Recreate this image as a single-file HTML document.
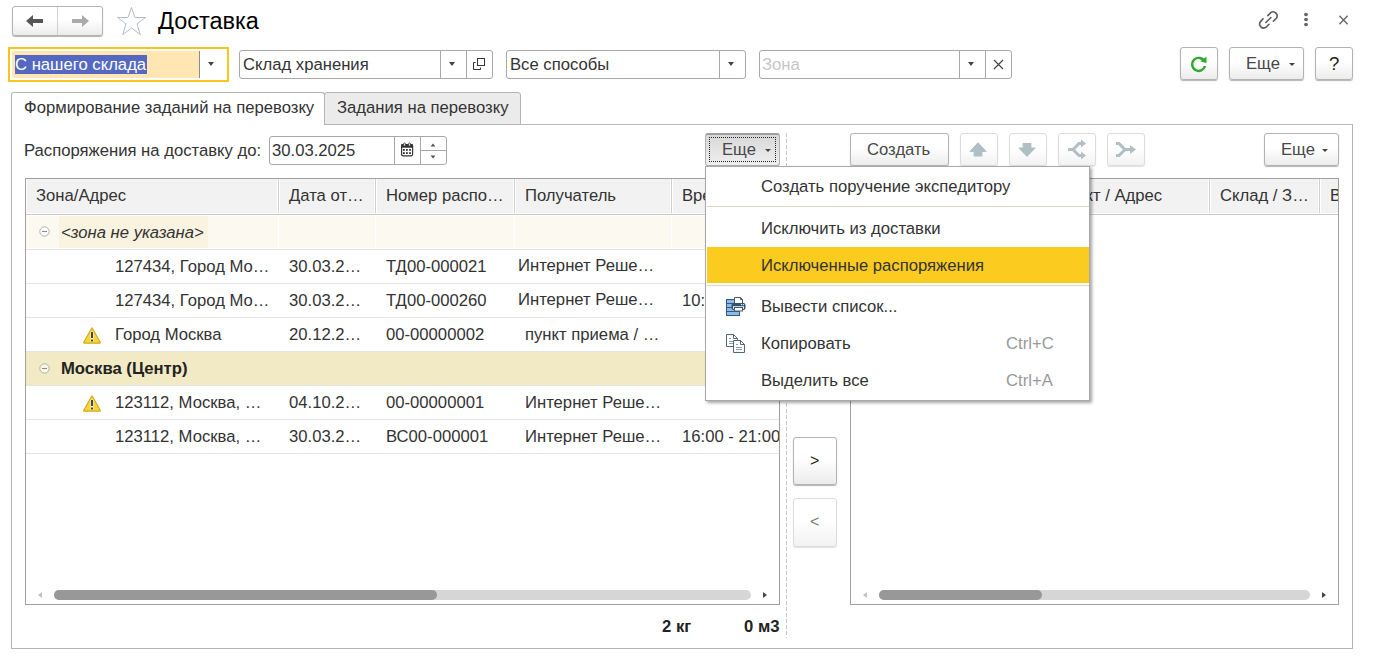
<!DOCTYPE html>
<html><head><meta charset="utf-8">
<style>
*{box-sizing:border-box;margin:0;padding:0}
html,body{width:1373px;height:661px;overflow:hidden;background:#fff}
body{position:relative;font-family:"Liberation Sans",sans-serif;font-size:16.67px;color:#333}
.a{position:absolute}
.t{position:absolute;white-space:nowrap;line-height:22px}
.btn{position:absolute;border:1px solid #b2b2b2;border-radius:3px;background:linear-gradient(#fff 45%,#ececec);box-shadow:0 1px 1px rgba(0,0,0,.3)}
.dbtn{position:absolute;border:1px solid #dcdcdc;border-radius:3px;background:linear-gradient(#fff 45%,#f2f2f2);box-shadow:0 1px 1px rgba(0,0,0,.12)}
.fld{position:absolute;border:1px solid #a8a8a8;border-radius:3px;background:#fff}
.vs{position:absolute;width:1px;background:#a8a8a8}
.dd{position:absolute;width:0;height:0;border-left:3.5px solid transparent;border-right:3.5px solid transparent;border-top:4px solid #444}
.rl{position:absolute;height:1px;background:#e4e4e4}
.hs{position:absolute;width:1px;background:#cfcfcf;box-shadow:-1px 0 0 #fff,1px 0 0 #fff}
.bs{position:absolute;width:1px;background:#ececec}
</style></head><body>

<!-- nav buttons -->
<div class="btn" style="left:12px;top:6px;width:91px;height:30px"></div>
<div class="a" style="left:57px;top:7px;width:1px;height:28px;background:#d0d0d0"></div>
<svg class="a" style="left:24px;top:13px" width="22" height="16" viewBox="0 0 22 16"><path d="M2 8 L9 2 L9 6 L19 6 L19 10 L9 10 L9 14 Z" fill="#555"/></svg>
<svg class="a" style="left:69px;top:13px" width="22" height="16" viewBox="0 0 22 16"><path d="M20 8 L13 2 L13 6 L3 6 L3 10 L13 10 L13 14 Z" fill="#aaa"/></svg>
<!-- star -->
<svg class="a" style="left:116px;top:6px" width="31" height="30" viewBox="0 0 31 30"><path d="M15.5 1.5 L19 11.5 L29.5 11.5 L21 17.8 L24.2 28.5 L15.5 22 L6.8 28.5 L10 17.8 L1.5 11.5 L12 11.5 Z" fill="none" stroke="#b4bcc4" stroke-width="1"/></svg>
<div class="t" style="left:158px;top:8px;font-size:23.5px;line-height:27px;color:#000">Доставка</div>

<!-- top right icons -->
<svg class="a" style="left:1250px;top:5px" width="40" height="30" viewBox="0 0 40 30"><g fill="none" stroke="#5a5a5a" stroke-width="1.6" stroke-linecap="round"><path d="M17.8 10.6 L20.7 7.7 A4 4 0 0 1 26.3 13.3 L23.4 16.2"/><path d="M13.1 13.8 L10.5 16.6 A4 4 0 0 0 16.1 22.2 L19 19.3"/><path d="M15.9 17.5 L20.9 12.5"/></g></svg>
<svg class="a" style="left:1301px;top:12px" width="10" height="16" viewBox="0 0 10 16"><g fill="#666"><ellipse cx="5" cy="2.5" rx="1.95" ry="1.75"/><ellipse cx="5" cy="7.5" rx="1.95" ry="1.75"/><ellipse cx="5" cy="12.4" rx="1.95" ry="1.75"/></g></svg>
<svg class="a" style="left:1336px;top:13px" width="14" height="14" viewBox="0 0 14 14"><path d="M3.4 2.8 L11.6 11.2 M11.6 2.8 L3.4 11.2" stroke="#666" stroke-width="1.4"/></svg>

<!-- filter row -->
<div class="a" style="left:8px;top:47px;width:221px;height:35px;border:2px solid #f8c61a"></div>
<div class="a" style="left:12px;top:51px;width:188px;height:27px;background:#ffe6b2;border-radius:2px"></div>
<div class="a" style="left:199px;top:51px;width:1px;height:27px;background:#8a8a8a"></div>
<div class="a" style="left:15px;top:55px;width:132px;height:19px;background:#5468c2"></div>
<div class="t" style="left:15px;top:54px;color:#fff">С нашего склада</div>
<div class="dd" style="left:208px;top:62px"></div>

<div class="fld" style="left:239px;top:50px;width:254px;height:29px"></div>
<div class="vs" style="left:440px;top:50px;height:29px"></div>
<div class="vs" style="left:466px;top:50px;height:29px"></div>
<div class="t" style="left:243px;top:54px">Склад хранения</div>
<div class="dd" style="left:449px;top:62px"></div>
<svg class="a" style="left:472px;top:57px" width="14" height="14" viewBox="0 0 14 14"><g fill="none" stroke="#333" stroke-width="1"><rect x="5.5" y="1.5" width="7" height="7"/><path d="M3.5 5.5 H1.5 V12.5 H8.5 V10.5"/></g></svg>

<div class="fld" style="left:506px;top:50px;width:240px;height:29px"></div>
<div class="vs" style="left:719px;top:50px;height:29px"></div>
<div class="t" style="left:510px;top:54px">Все способы</div>
<div class="dd" style="left:728px;top:62px"></div>

<div class="fld" style="left:759px;top:50px;width:253px;height:29px"></div>
<div class="vs" style="left:959px;top:50px;height:29px"></div>
<div class="vs" style="left:985px;top:50px;height:29px"></div>
<div class="t" style="left:762px;top:54px;color:#c6c6c6">Зона</div>
<div class="dd" style="left:968px;top:62px"></div>
<svg class="a" style="left:992px;top:58px" width="13" height="13" viewBox="0 0 13 13"><path d="M2 2 L11 11 M11 2 L2 11" stroke="#444" stroke-width="1.2"/></svg>

<div class="btn" style="left:1180px;top:47px;width:38px;height:33px"></div>
<svg class="a" style="left:1188px;top:53px" width="22" height="22" viewBox="0 0 22 22"><path d="M16.5 8.5 A6.5 6.5 0 1 0 17 13" fill="none" stroke="#2ea82e" stroke-width="2.4"/><path d="M12.5 8.5 L18.5 3.5 L18.5 10 Z" fill="#2ea82e"/></svg>
<div class="btn" style="left:1229px;top:47px;width:75px;height:33px"></div>
<div class="t" style="left:1246px;top:53px;color:#484848">Еще</div>
<div class="dd" style="left:1289px;top:63px;border-left-width:3.5px;border-right-width:3.5px;border-top-width:3.5px"></div>
<div class="btn" style="left:1315px;top:47px;width:38px;height:33px"></div>
<div class="t" style="left:1329px;top:53px;font-size:18.6px;color:#222">?</div>

<!-- tabs -->
<div class="a" style="left:11px;top:124px;width:1342px;height:525px;border:1px solid #b4b4b4;border-top-color:#b8b8b8"></div>
<div class="a" style="left:324px;top:92px;width:197px;height:33px;background:#ebebeb;border:1px solid #b4b4b4;border-radius:3px 3px 0 0"></div>
<div class="a" style="left:11px;top:92px;width:314px;height:33px;background:#fff;border:1px solid #b4b4b4;border-bottom:none;border-radius:3px 3px 0 0"></div>
<div class="t" style="left:24px;top:97px">Формирование заданий на перевозку</div>
<div class="t" style="left:337px;top:97px">Задания на перевозку</div>

<!-- content header -->
<div class="t" style="left:24px;top:140px">Распоряжения на доставку до:</div>
<div class="fld" style="left:269px;top:136px;width:178px;height:29px"></div>
<div class="vs" style="left:394px;top:136px;height:29px"></div>
<div class="vs" style="left:420px;top:136px;height:29px"></div>
<div class="a" style="left:420px;top:150px;width:26px;height:1px;background:#a8a8a8"></div>
<div class="t" style="left:272px;top:140px">30.03.2025</div>
<svg class="a" style="left:400px;top:142px" width="14" height="15" viewBox="0 0 14 15"><rect x="1.6" y="2.6" width="11" height="11.2" rx="1.6" fill="#fff" stroke="#333" stroke-width="1.2"/><rect x="1.1" y="2.1" width="12" height="3.7" rx="1.3" fill="#333"/><rect x="3.6" y="0.9" width="1.8" height="3.2" rx=".9" fill="#fff" stroke="#333" stroke-width=".8"/><rect x="8.6" y="0.9" width="1.8" height="3.2" rx=".9" fill="#fff" stroke="#333" stroke-width=".8"/><g fill="#333"><rect x="3" y="7" width="1.8" height="1.8"/><rect x="6" y="7" width="1.8" height="1.8"/><rect x="9.1" y="7" width="1.8" height="1.8"/><rect x="3" y="10.2" width="1.8" height="1.8"/><rect x="6" y="10.2" width="1.8" height="1.8"/><rect x="9.1" y="10.2" width="1.8" height="1.8"/></g></svg>
<svg class="a" style="left:430px;top:143px" width="6" height="4" viewBox="0 0 6 4"><path d="M3 0.5 L5.5 3.5 H0.5 Z" fill="#555"/></svg>
<svg class="a" style="left:430px;top:155px" width="6" height="4" viewBox="0 0 6 4"><path d="M3 3.5 L5.5 0.5 H0.5 Z" fill="#555"/></svg>

<!-- pressed Еще -->
<div class="a" style="left:705px;top:133px;width:75px;height:33px;border:1px solid #b0b0b0;border-top:2px solid #a0a0a0;border-radius:3px;background:linear-gradient(#d8d8d8,#efefef)"></div>
<div class="a" style="left:709px;top:137px;width:67px;height:25px;border:1px dotted #222"></div>
<div class="t" style="left:722px;top:139px;color:#484848">Еще</div>
<div class="dd" style="left:765px;top:149px;border-left-width:3.5px;border-right-width:3.5px;border-top-width:3.5px"></div>

<!-- dashed splitter -->
<div class="a" style="left:786px;top:133px;width:1px;height:505px;background:repeating-linear-gradient(#c8c8c8 0 4px,transparent 4px 6px)"></div>

<!-- right toolbar -->
<div class="btn" style="left:850px;top:133px;width:99px;height:33px"></div>
<div class="t" style="left:867px;top:139px;color:#484848">Создать</div>
<div class="dbtn" style="left:960px;top:133px;width:38px;height:33px"></div>
<div class="dbtn" style="left:1009px;top:133px;width:38px;height:33px"></div>
<div class="dbtn" style="left:1058px;top:133px;width:38px;height:33px"></div>
<div class="dbtn" style="left:1107px;top:133px;width:38px;height:33px"></div>
<svg class="a" style="left:969px;top:141px" width="19" height="17" viewBox="0 0 19 17"><path d="M9 2.2 L16.8 10.3 L12.8 10.3 L12.8 15 L5.2 15 L5.2 10.3 L1.2 10.3 Z" fill="#b0bec5" stroke="#b0bec5" stroke-width="1.2" stroke-linejoin="round"/></svg>
<svg class="a" style="left:1018px;top:141px" width="19" height="17" viewBox="0 0 19 17"><path d="M9 15 L16.8 7 L12.8 7 L12.8 2.5 L5.2 2.5 L5.2 7 L1.2 7 Z" fill="#b0bec5" stroke="#b0bec5" stroke-width="1.2" stroke-linejoin="round"/></svg>
<svg class="a" style="left:1066px;top:139px" width="22" height="21" viewBox="0 0 22 21"><g fill="none" stroke="#b0bec5" stroke-width="3"><path d="M2 10.5 H7 L13 4.5 H16"/><path d="M7 10.5 L13 16.5 H16"/></g><path d="M15 0.5 L20 4.5 L15 8.5 Z M15 12.5 L20 16.5 L15 20.5 Z" fill="#b0bec5"/></svg>
<svg class="a" style="left:1115px;top:139px" width="22" height="21" viewBox="0 0 22 21"><g fill="none" stroke="#b0bec5" stroke-width="3"><path d="M1 4.5 H4 L10 10.5 H16"/><path d="M1 16.5 H4 L10 10.5"/></g><path d="M15 6 L21 10.5 L15 15 Z" fill="#b0bec5"/></svg>
<div class="btn" style="left:1264px;top:133px;width:75px;height:33px"></div>
<div class="t" style="left:1281px;top:139px;color:#484848">Еще</div>
<div class="dd" style="left:1322px;top:149px;border-left-width:3.5px;border-right-width:3.5px;border-top-width:3.5px"></div>

<!-- left table -->
<div class="a" style="left:25px;top:178px;width:755px;height:427px;border:1px solid #a0a0a0;overflow:hidden">
  <div class="a" style="left:1px;top:0;width:752px;height:34px;background:#f2f2f2"></div>
  <div class="a" style="left:0;top:35px;width:753px;height:1px;background:#cacaca"></div>
  <div class="hs" style="left:252px;top:0;height:34px"></div>
  <div class="hs" style="left:349px;top:0;height:34px"></div>
  <div class="hs" style="left:488px;top:0;height:34px"></div>
  <div class="hs" style="left:645px;top:0;height:34px"></div>
  <div class="t" style="left:10px;top:6px">Зона/Адрес</div>
  <div class="t" style="left:263px;top:6px">Дата от…</div>
  <div class="t" style="left:360px;top:6px">Номер распо…</div>
  <div class="t" style="left:499px;top:6px">Получатель</div>
  <div class="t" style="left:656px;top:6px">Время</div>
  <!-- group 1 -->
  <div class="a" style="left:0;top:37px;width:753px;height:32px;background:#fcf9f0"></div>
  <div class="a" style="left:33px;top:37px;width:149px;height:32px;background:#faf3e0"></div>
  <div class="bs" style="left:252px;top:37px;height:32px;background:#fff"></div>
  <div class="bs" style="left:349px;top:37px;height:32px;background:#fff"></div>
  <div class="bs" style="left:488px;top:37px;height:32px;background:#fff"></div>
  <div class="bs" style="left:645px;top:37px;height:32px;background:#fff"></div>
  <svg class="a" style="left:11px;top:45px" width="15" height="15" viewBox="0 0 15 15"><circle cx="7.5" cy="7.5" r="4.7" fill="#fff" stroke="#b0b0b0" stroke-width="1"/><path d="M5 7.5 H10" stroke="#8a8a8a" stroke-width="1.1"/></svg>
  <div class="t" style="left:35px;top:43px;font-style:italic">&lt;зона не указана&gt;</div>
  <div class="rl" style="left:0;top:70px;width:753px"></div>
  <div class="t" style="left:89px;top:77px">127434, Город Мо…</div>
  <div class="t" style="left:263px;top:77px">30.03.2…</div>
  <div class="t" style="left:360px;top:77px">ТД00-000021</div>
  <div class="t" style="left:492px;top:76px">Интернет Реше…</div>
  <div class="rl" style="left:0;top:104px;width:753px"></div>
  <div class="t" style="left:89px;top:111px">127434, Город Мо…</div>
  <div class="t" style="left:263px;top:111px">30.03.2…</div>
  <div class="t" style="left:360px;top:111px">ТД00-000260</div>
  <div class="t" style="left:656px;top:111px">10:00 - 18:00</div>
  <div class="t" style="left:492px;top:110px">Интернет Реше…</div>
  <div class="rl" style="left:0;top:138px;width:753px"></div>
  <svg class="a" style="left:56px;top:147px" width="20" height="19" viewBox="0 0 20 19"><path d="M9.7 2.2 Q10 1.6 10.3 2.2 L18.2 16.2 Q18.5 17.2 17.5 17.2 H2.5 Q1.5 17.2 1.8 16.2 Z" fill="#f5d43c" stroke="#d2ab1c" stroke-width="1.2" stroke-linejoin="round"/><rect x="8.5" y="5.5" width="3" height="7.5" rx="1" fill="#fff" fill-opacity=".85"/><rect x="9" y="6" width="2" height="6" fill="#454545"/><rect x="8.5" y="13" width="3" height="3" rx="1" fill="#fff" fill-opacity=".85"/><rect x="9" y="13.5" width="2" height="2" fill="#454545"/></svg>
  <div class="t" style="left:89px;top:145px">Город Москва</div>
  <div class="t" style="left:263px;top:145px">20.12.2…</div>
  <div class="t" style="left:360px;top:145px">00-00000002</div>
  <div class="t" style="left:499px;top:145px">пункт приема / …</div>
  <div class="rl" style="left:0;top:172px;width:753px"></div>
  <div class="a" style="left:0;top:173px;width:753px;height:33px;background:#f2eac4"></div>
  <svg class="a" style="left:11px;top:182px" width="15" height="15" viewBox="0 0 15 15"><circle cx="7.5" cy="7.5" r="4.7" fill="rgba(255,255,255,.6)" stroke="#b0b0b0" stroke-width="1"/><path d="M5 7.5 H10" stroke="#8a8a8a" stroke-width="1.1"/></svg>
  <div class="t" style="left:35px;top:179px;font-weight:bold;color:#222">Москва (Центр)</div>
  <div class="rl" style="left:0;top:206px;width:753px"></div>
  <svg class="a" style="left:56px;top:215px" width="20" height="19" viewBox="0 0 20 19"><path d="M9.7 2.2 Q10 1.6 10.3 2.2 L18.2 16.2 Q18.5 17.2 17.5 17.2 H2.5 Q1.5 17.2 1.8 16.2 Z" fill="#f5d43c" stroke="#d2ab1c" stroke-width="1.2" stroke-linejoin="round"/><rect x="8.5" y="5.5" width="3" height="7.5" rx="1" fill="#fff" fill-opacity=".85"/><rect x="9" y="6" width="2" height="6" fill="#454545"/><rect x="8.5" y="13" width="3" height="3" rx="1" fill="#fff" fill-opacity=".85"/><rect x="9" y="13.5" width="2" height="2" fill="#454545"/></svg>
  <div class="t" style="left:89px;top:213px">123112, Москва, …</div>
  <div class="t" style="left:263px;top:213px">04.10.2…</div>
  <div class="t" style="left:360px;top:213px">00-00000001</div>
  <div class="t" style="left:499px;top:213px">Интернет Реше…</div>
  <div class="rl" style="left:0;top:240px;width:753px"></div>
  <div class="t" style="left:89px;top:247px">123112, Москва, …</div>
  <div class="t" style="left:263px;top:247px">30.03.2…</div>
  <div class="t" style="left:360px;top:247px">ВС00-000001</div>
  <div class="t" style="left:499px;top:247px">Интернет Реше…</div>
  <div class="t" style="left:656px;top:247px">16:00 - 21:00</div>
  <div class="rl" style="left:0;top:274px;width:753px"></div>
  <!-- scrollbar -->
  <div class="a" style="left:28px;top:411px;width:697px;height:10px;background:#d6d6d6;border-radius:5px"></div>
  <div class="a" style="left:28px;top:411px;width:383px;height:10px;background:#989898;border-radius:5px"></div>
  <div class="dd" style="left:12px;top:413px;border-top:3px solid transparent;border-bottom:3px solid transparent;border-right:4px solid #c0c0c0;border-left:none"></div>
  <div class="dd" style="left:737px;top:413px;border-top:3px solid transparent;border-bottom:3px solid transparent;border-left:4px solid #444;border-right:none"></div>
</div>

<!-- middle buttons -->
<div class="btn" style="left:793px;top:437px;width:44px;height:48px"></div>
<div class="t" style="left:810px;top:450px;font-size:16px;color:#222">&gt;</div>
<div class="dbtn" style="left:793px;top:498px;width:44px;height:49px"></div>
<div class="t" style="left:810px;top:511px;font-size:16px;color:#7a7a7a">&lt;</div>

<!-- right table -->
<div class="a" style="left:850px;top:178px;width:489px;height:427px;border:1px solid #a0a0a0;overflow:hidden">
  <div class="a" style="left:1px;top:0;width:486px;height:34px;background:#f2f2f2"></div>
  <div class="a" style="left:0;top:35px;width:487px;height:1px;background:#cacaca"></div>
  <div class="hs" style="left:358px;top:0;height:34px"></div>
  <div class="hs" style="left:468px;top:0;height:34px"></div>
  <div class="t" style="left:205px;top:6px">Пункт / Адрес</div>
  <div class="t" style="left:369px;top:6px">Склад / З…</div>
  <div class="t" style="left:479px;top:6px">Вес</div>
  <div class="a" style="left:28px;top:411px;width:431px;height:10px;background:#d6d6d6;border-radius:5px"></div>
  <div class="a" style="left:28px;top:411px;width:163px;height:10px;background:#989898;border-radius:5px"></div>
  <div class="dd" style="left:12px;top:413px;border-top:3px solid transparent;border-bottom:3px solid transparent;border-right:4px solid #c0c0c0;border-left:none"></div>
  <div class="dd" style="left:471px;top:413px;border-top:3px solid transparent;border-bottom:3px solid transparent;border-left:4px solid #444;border-right:none"></div>
</div>

<!-- totals -->
<div class="t" style="left:662px;top:616px;font-weight:bold;color:#222">2 кг</div>
<div class="t" style="left:744px;top:616px;font-weight:bold;color:#222">0 м3</div>

<!-- popup menu -->
<div class="a" style="left:705px;top:166px;width:385px;height:235px;background:#fff;border:1px solid #a8a8a8;box-shadow:2px 2px 3px rgba(0,0,0,.35)">
  <div class="t" style="left:55px;top:9px">Создать поручение экспедитору</div>
  <div class="a" style="left:1px;top:39px;width:382px;height:1px;background:#dcd7c2"></div>
  <div class="t" style="left:55px;top:51px">Исключить из доставки</div>
  <div class="a" style="left:1px;top:80px;width:382px;height:36px;background:#fbcc1f"></div>
  <div class="t" style="left:55px;top:88px">Исключенные распоряжения</div>
  <div class="a" style="left:1px;top:118px;width:382px;height:1px;background:#dcd7c2"></div>
  <svg class="a" style="left:16px;top:125px" width="28" height="28" viewBox="0 0 28 28"><rect x="4.5" y="7.5" width="13" height="16" fill="#8db9e2" stroke="#2d5a86"/><path d="M4.5 11.5 H17.5 M4.5 15.5 H17.5 M4.5 19.5 H17.5" stroke="#2d5a86"/><path d="M12.5 5.5 H18.5 L20.5 7.5 V12 H12.5 Z" fill="#fff" stroke="#555"/><path d="M18.5 5.5 V7.5 H20.5" fill="none" stroke="#555"/><rect x="9.5" y="11" width="14" height="7" rx="2.2" fill="#2f5479"/><rect x="11" y="14.2" width="11" height="2.6" fill="#e8edf2"/><rect x="12.5" y="15.5" width="8" height="3.5" fill="#fff" stroke="#4a5a6a"/><circle cx="19.6" cy="12.6" r=".7" fill="#fff"/><circle cx="21.5" cy="12.6" r=".7" fill="#fff"/></svg>
  <div class="t" style="left:55px;top:129px">Вывести список...</div>
  <svg class="a" style="left:16px;top:163px" width="28" height="28" viewBox="0 0 28 28"><path d="M4.5 4.5 H11.5 L15.5 8.5 V16.5 H4.5 Z" fill="#fff" stroke="#53667a"/><path d="M11.5 4.5 V8.5 H15.5" fill="none" stroke="#53667a"/><path d="M11.5 10.5 H18.5 L22.5 14.5 V22.5 H11.5 Z" fill="#fff" stroke="#53667a"/><path d="M18.5 10.5 V14.5 H22.5" fill="none" stroke="#53667a"/><path d="M7 8.5 H9 M7 11.5 H11 M7 13.5 H11 M14 14.5 H16 M14 17.5 H20 M14 19.5 H20" stroke="#909eab"/></svg>
  <div class="t" style="left:55px;top:166px">Копировать</div>
  <div class="t" style="left:300px;top:166px;color:#999">Ctrl+C</div>
  <div class="t" style="left:55px;top:203px">Выделить все</div>
  <div class="t" style="left:300px;top:203px;color:#999">Ctrl+A</div>
</div>

</body></html>
